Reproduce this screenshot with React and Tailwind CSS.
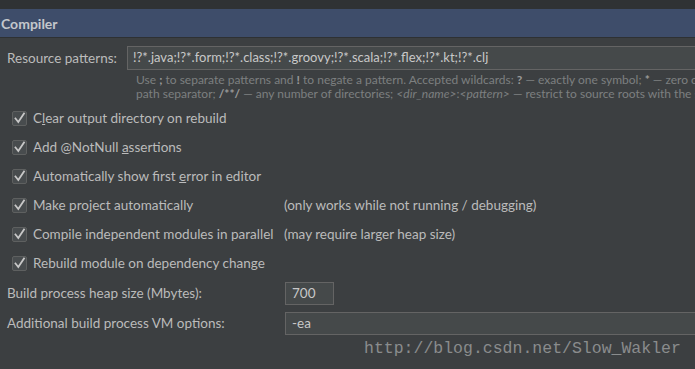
import React from "react";

const font = { fontFamily: 'Lato, "Noto Sans", sans-serif' };

function Check() {
  return (
    <span className="flex h-[15px] w-[15px] shrink-0 items-center justify-center rounded-[2px] border border-[#5e6060] bg-[#484c4e]">
      <svg width="13" height="13" viewBox="0 0 13 13">
        <path
          d="M2.5 6.5 L5.3 10 L11 1.5"
          fill="none"
          stroke="#c8c8c8"
          strokeWidth="1.8"
          strokeLinecap="square"
        />
      </svg>
    </span>
  );
}

function Row({ children, note }) {
  return (
    <div className="flex h-[29px] items-center">
      <div className="flex w-[284px] shrink-0 items-center gap-[6px] pl-[12px]">
        <Check />
        <span className="whitespace-nowrap">{children}</span>
      </div>
      {note ? <span className="whitespace-nowrap">{note}</span> : null}
    </div>
  );
}

export default function App() {
  return (
    <div
      className="flex h-[369px] w-[695px] flex-col overflow-hidden bg-[#3c3f41] text-[13.5px] text-[#bbbbbb]"
      style={font}
    >
      <div className="h-[9px] shrink-0 bg-[#2f3234]" />
      <div className="flex h-[28px] shrink-0 items-center bg-[#3e4d6a] pl-[1px] text-[14px] font-bold text-[#c4c7cc]">
        Compiler
      </div>
      <div className="h-[1px] shrink-0 bg-[#2e3133]" />

      <div className="mt-[8px] flex h-[24px] items-center">
        <span className="w-[127px] shrink-0 whitespace-nowrap pl-[7px]">Resource patterns:</span>
        <div className="flex h-[24px] flex-1 items-center whitespace-nowrap border border-r-0 border-[#646464] bg-[#45494a] pl-[5px] text-[13px] text-[#c8c8c8]">
          !?*.java;!?*.form;!?*.class;!?*.groovy;!?*.scala;!?*.flex;!?*.kt;!?*.clj
        </div>
      </div>

      <div className="mt-[3px] overflow-hidden whitespace-nowrap pl-[136px] text-[12px] leading-[14px] text-[#7d7f80]">
        <div className="h-[14px] overflow-hidden">
          Use <b className="text-[#9a9a9a]">;</b> to separate patterns and{" "}
          <b className="text-[#9a9a9a]">!</b> to negate a pattern. Accepted wildcards:{" "}
          <b className="text-[#9a9a9a]">?</b> — exactly one symbol;{" "}
          <b className="text-[#9a9a9a]">*</b> — zero or more symbols
        </div>
        <div className="h-[14px] overflow-hidden">
          path separator; <b className="text-[#9a9a9a]">/**/</b> — any number of directories;{" "}
          <i>&lt;dir_name&gt;</i>:<i>&lt;pattern&gt;</i> — restrict to source roots with the specified name
        </div>
      </div>

      <div className="mt-[3px] flex flex-col">
        <Row>
          C<span className="underline">l</span>ear output directory on rebuild
        </Row>
        <Row>
          Add @NotNull <span className="underline">a</span>ssertions
        </Row>
        <Row>
          Automatically show first <span className="underline">e</span>rror in editor
        </Row>
        <Row note="(only works while not running / debugging)">Make project automatically</Row>
        <Row note="(may require larger heap size)">Compile independent modules in parallel</Row>
        <Row>Rebuild module on dependency change</Row>
      </div>

      <div className="mt-[4px] flex h-[23px] items-center">
        <span className="w-[285px] shrink-0 whitespace-nowrap pl-[7px]">Build process heap size (Mbytes):</span>
        <div className="flex h-[23px] w-[49px] items-center border border-[#646464] bg-[#45494a] pl-[6px] text-[#c8c8c8]">
          700
        </div>
      </div>

      <div className="mt-[7px] flex h-[23px] items-center">
        <span className="w-[285px] shrink-0 whitespace-nowrap pl-[7px]">Additional build process VM options:</span>
        <div className="flex h-[23px] flex-1 items-center border border-r-0 border-[#646464] bg-[#45494a] pl-[6px] text-[#c8c8c8]">
          -ea
        </div>
      </div>

      <div
        className="mt-[4px] pl-[364px] text-[16.5px] leading-[20px] text-[#8a8c8d]"
        style={{ fontFamily: '"Liberation Mono", monospace' }}
      >
        http://blog.csdn.net/Slow_Wakler
      </div>
    </div>
  );
}
